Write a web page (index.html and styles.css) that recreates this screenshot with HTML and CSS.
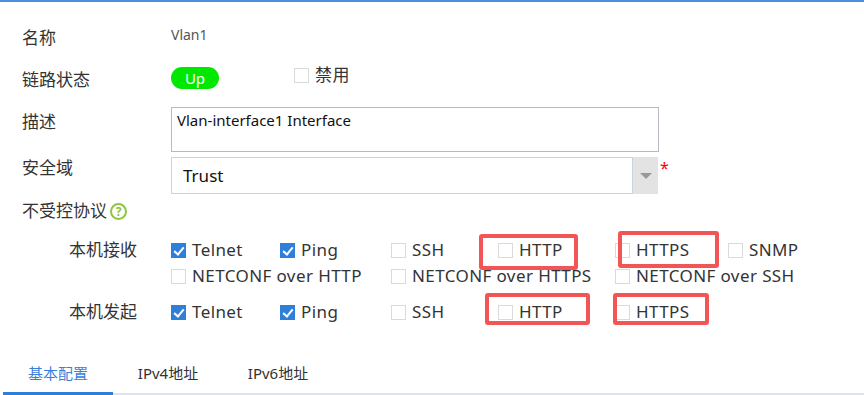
FILE: index.html
```html
<!DOCTYPE html>
<html lang="zh-CN">
  <head>
    <meta charset="UTF-8" />
    <meta name="viewport" content="width=device-width, initial-scale=1.0" />
    <title>Vlan1</title>
    <link rel="stylesheet" href="styles.css">
  </head>
  <body>
    <div class="topbar"></div>

    <div class="form">
      <div class="row row-name">
        <div class="label">名称</div>
        <div class="value">Vlan1</div>
      </div>

      <div class="row row-link">
        <div class="label">链路状态</div>
        <div class="field">
          <span class="pill">Up</span>
          <label class="check check-disable"><span class="cb"></span>禁用</label>
        </div>
      </div>

      <div class="row row-desc">
        <div class="label">描述</div>
        <div class="textbox">Vlan-interface1 Interface</div>
      </div>

      <div class="row row-zone">
        <div class="label">安全域</div>
        <div class="select">
          <div class="select-text">Trust</div>
          <div class="select-btn"><span class="arrow"></span></div>
        </div>
        <span class="required">*</span>
      </div>

      <div class="row row-proto">
        <div class="label">不受控协议<span class="help">?</span></div>
      </div>

      <div class="pgroup pgroup-in">
        <div class="plabel">本机接收</div>
        <div class="pgrid">
          <label class="check"><span class="cb on"></span>Telnet</label>
          <label class="check"><span class="cb on"></span>Ping</label>
          <label class="check"><span class="cb"></span>SSH</label>
          <label class="check"><span class="cb"></span>HTTP</label>
          <label class="check"><span class="cb"></span>HTTPS</label>
          <label class="check"><span class="cb"></span>SNMP</label>
          <label class="check span2"><span class="cb"></span>NETCONF over HTTP</label>
          <label class="check span2"><span class="cb"></span>NETCONF over HTTPS</label>
          <label class="check span2"><span class="cb"></span>NETCONF over SSH</label>
        </div>
      </div>

      <div class="pgroup pgroup-out">
        <div class="plabel">本机发起</div>
        <div class="pgrid">
          <label class="check"><span class="cb on"></span>Telnet</label>
          <label class="check"><span class="cb on"></span>Ping</label>
          <label class="check"><span class="cb"></span>SSH</label>
          <label class="check"><span class="cb"></span>HTTP</label>
          <label class="check"><span class="cb"></span>HTTPS</label>
        </div>
      </div>
    </div>

    <div class="tabs">
      <div class="tab active">基本配置</div>
      <div class="tab">IPv4地址</div>
      <div class="tab">IPv6地址</div>
    </div>

    <!-- annotation boxes drawn over the screenshot -->
    <div class="mark mark-1"></div>
    <div class="mark mark-2"></div>
    <div class="mark mark-3"></div>
    <div class="mark mark-4"></div>
  </body>
</html>
```

FILE: styles.css
```css
:root {
  --text: #333333;
  --blue: #2e7fd9;
  --line: #dfe3ec;
  --mark: #f25555;
}

body {
  margin: 0;
  padding: 0;
  font-family: 'Noto Sans', 'Noto Sans CJK SC', sans-serif;
  color: var(--text);
  background: #ffffff;
  position: relative;
  overflow: hidden;
}

.topbar {
  height: 2px;
  background-color: #4d8fdc;
}

.form {
  padding: 18px 0 0 22px;
}

.row {
  display: flex;
  align-items: center;
}

.label {
  width: 149px;
  flex-shrink: 0;
  font-size: 17px;
  line-height: 24px;
}

.row-name {
  height: 36px;
}

.value {
  font-size: 14px;
  line-height: 20px;
  color: #555555;
  margin-bottom: 6px;
}

.row-link {
  height: 36px;
  margin-top: 6px;
}

.field {
  display: flex;
  align-items: center;
  margin-bottom: 4px;
}

.pill {
  display: inline-block;
  width: 48px;
  height: 22px;
  line-height: 22px;
  border-radius: 11px;
  background-color: #00e800;
  color: #ffffff;
  font-size: 15px;
  text-align: center;
}

.check-disable {
  margin-left: 75px;
  margin-bottom: 6px;
  letter-spacing: 0;
}

.row-desc {
  margin-top: 9px;
  align-items: flex-start;
}

.row-desc .label {
  margin-top: 3px;
}

.textbox {
  width: 488px;
  height: 45px;
  box-sizing: border-box;
  border: 1px solid #b8b8c6;
  padding: 3px 5px;
  font-size: 15px;
  line-height: 18px;
  color: #111111;
}

.row-zone {
  margin-top: 5px;
  align-items: flex-start;
}

.row-zone .label {
  margin-top: -1px;
}

.select {
  display: flex;
  width: 487px;
  height: 37px;
}

.select-text {
  flex: 1;
  border: 1px solid #c8d3e4;
  padding-left: 11px;
  font-size: 17px;
  line-height: 35px;
  color: #111111;
}

.select-btn {
  width: 25px;
  background-color: #e3e3e3;
  display: flex;
  align-items: center;
  justify-content: center;
}

.arrow {
  width: 0;
  height: 0;
  border-left: 6px solid transparent;
  border-right: 6px solid transparent;
  border-top: 6px solid #999999;
}

.required {
  color: #ff0000;
  font-size: 16px;
  line-height: 16px;
  margin-left: 2px;
  margin-top: 3px;
}

.row-proto {
  margin-top: 5px;
  height: 24px;
}

.row-proto .label {
  display: flex;
  align-items: center;
  width: auto;
}

.help {
  display: inline-block;
  width: 17px;
  height: 17px;
  box-sizing: border-box;
  border: 2px solid #8cc63f;
  border-radius: 50%;
  color: #8cc63f;
  font-size: 12px;
  font-weight: bold;
  line-height: 13px;
  text-align: center;
  margin-left: 3px;
}

.pgroup {
  display: flex;
}

.pgroup-in {
  margin-top: 14px;
}

.pgroup-out {
  margin-top: 10px;
}

.plabel {
  width: 149px;
  flex-shrink: 0;
  box-sizing: border-box;
  padding-left: 47px;
  font-size: 17px;
  line-height: 26px;
}

.pgrid {
  display: grid;
  grid-template-columns: 109px 111px 107px 117px 113px auto;
  grid-auto-rows: 26px;
  align-items: center;
}

.span2 {
  grid-column: span 2;
}

.check {
  display: flex;
  align-items: center;
  font-size: 17px;
  line-height: 22px;
  letter-spacing: 0.4px;
  white-space: nowrap;
}

.cb {
  position: relative;
  width: 15px;
  height: 15px;
  box-sizing: border-box;
  border: 1px solid #dadada;
  background-color: #ffffff;
  margin-right: 6px;
  flex-shrink: 0;
}

.cb.on {
  background-color: var(--blue);
  border-color: var(--blue);
}

.cb.on:after {
  content: "";
  position: absolute;
  left: 4px;
  top: 1px;
  width: 4px;
  height: 8px;
  border-right: 2px solid #ffffff;
  border-bottom: 2px solid #ffffff;
  transform: rotate(40deg);
}

.tabs {
  display: flex;
  margin: 28px 0 0 3px;
  border-bottom: 2px solid var(--line);
}

.tab {
  width: 110px;
  box-sizing: border-box;
  padding: 10px 0 9px;
  font-size: 15px;
  line-height: 20px;
  text-align: center;
  color: #333333;
  border-bottom: 3px solid transparent;
  margin-bottom: -2px;
}

.tab.active {
  color: #3a80d8;
  border-bottom-color: var(--blue);
}

/* red annotation boxes */
.mark {
  position: absolute;
  box-sizing: border-box;
  border: 4px solid var(--mark);
  border-radius: 3px;
}

.mark-1 {
  left: 479px;
  top: 234px;
  width: 99px;
  height: 36px;
}

.mark-2 {
  left: 618px;
  top: 231px;
  width: 101px;
  height: 37px;
}

.mark-3 {
  left: 485px;
  top: 293px;
  width: 105px;
  height: 32px;
}

.mark-4 {
  left: 613px;
  top: 293px;
  width: 96px;
  height: 32px;
}
```
